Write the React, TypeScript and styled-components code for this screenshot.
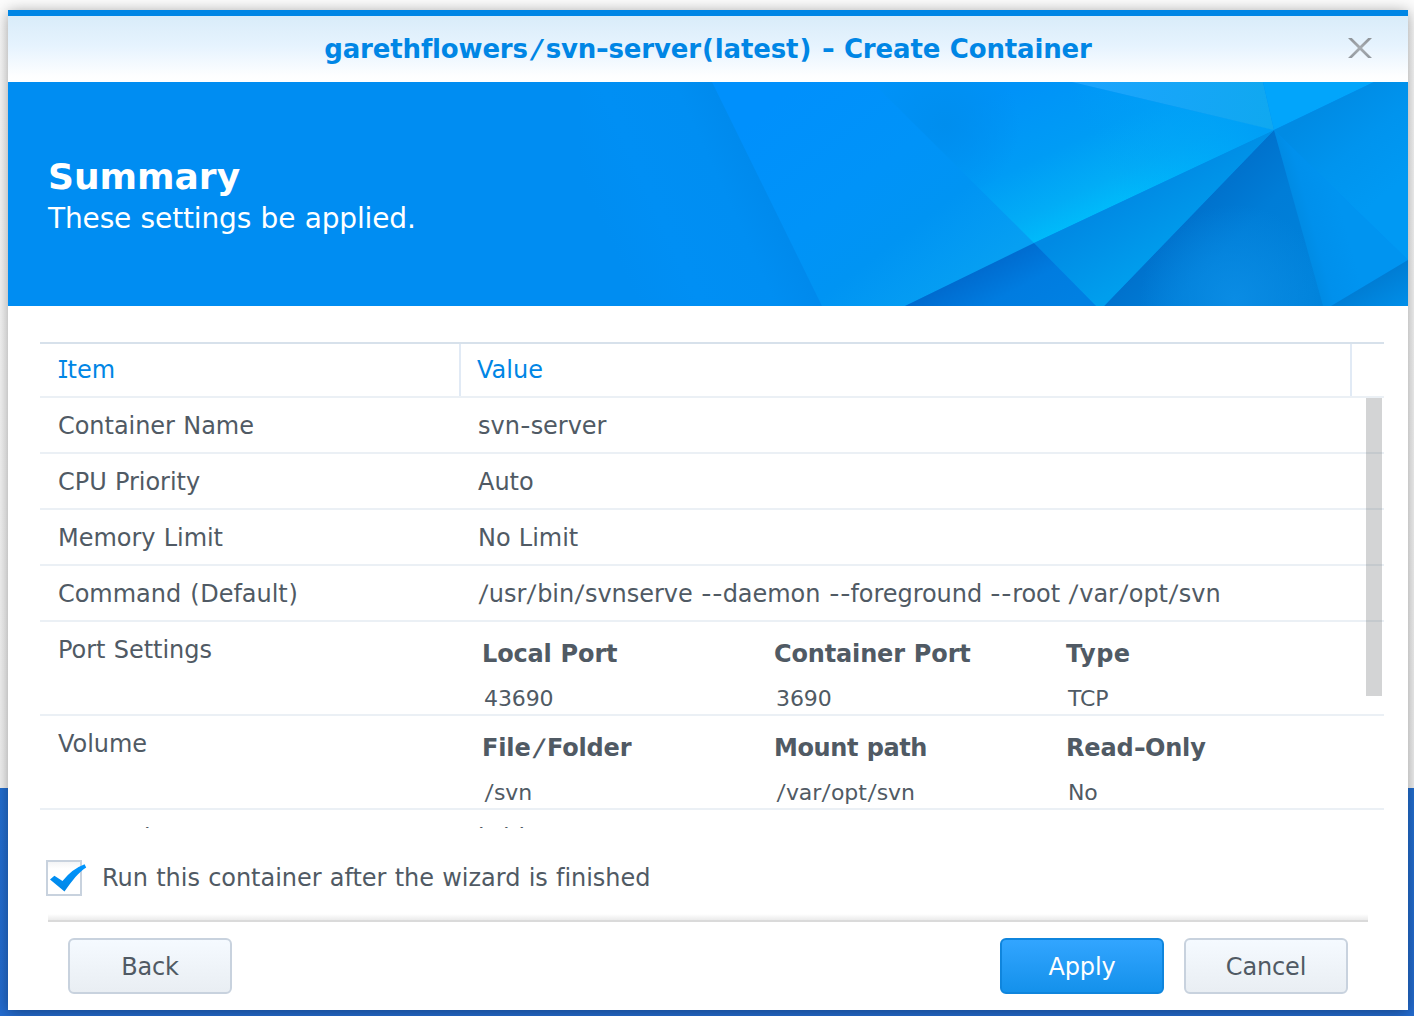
import React from "react";
import styled, { createGlobalStyle } from "styled-components";

const Global = createGlobalStyle`
  * { box-sizing: border-box; }
  html, body { margin: 0; height: 100%; overflow: hidden; }
  body {
    font-family: "DejaVu Sans", Verdana, sans-serif;
    font-size: 24px;
    font-variant-ligatures: none;
    word-spacing: 0.03em;
    color: #505a64;
  }
`;

const Desktop = styled.div`
  width: 1414px;
  height: 1016px;
  padding: 10px 6px 6px 8px;
  overflow: hidden;
  background: linear-gradient(180deg, #fcfcfc 0, #f4f4f4 788px, #236fd2 788px, #246cd0 100%);
`;

const Dialog = styled.section`
  width: 1400px;
  height: 1000px;
  display: flex;
  flex-direction: column;
  background: #fff;
  border-top: 6px solid #0086e5;
  box-shadow: 0 2px 14px rgba(0, 0, 0, 0.38);
`;

const TitleBar = styled.header`
  height: 66px;
  flex: none;
  display: grid;
  grid-template-columns: 96px 1fr 96px;
  align-items: center;
  background: linear-gradient(180deg, #d9ecf9 0%, #e6f3fe 45%, #fdfeff 90%, #fff 100%);
`;

const Title = styled.h1`
  margin: 0;
  grid-column: 2;
  text-align: center;
  font-size: 26px;
  line-height: 32px;
  font-weight: 700;
  letter-spacing: -0.15px;
  color: #0086e5;
  white-space: nowrap;
`;

const CloseButton = styled.button`
  width: 26px;
  height: 22px;
  margin: 0 0 2px 35px;
  padding: 0;
  border: 0;
  background: none;
  display: flex;
`;

const Banner = styled.div`
  height: 224px;
  flex: none;
  display: grid;
  background: #008df2;
  color: #fff;
  > * { grid-area: 1 / 1; }
`;

const BannerArt = styled.svg`
  display: block;
  justify-self: end;
`;

const BannerText = styled.div`
  padding: 72px 40px 0;
`;

const Heading = styled.h2`
  margin: 0;
  font-size: 36px;
  line-height: 46px;
  font-weight: 700;
`;

const Lead = styled.p`
  margin: 0;
  font-size: 28px;
  line-height: 38px;
  letter-spacing: -0.15px;
`;

const Table = styled.div`
  margin: 36px 24px 0 32px;
  flex: none;
`;

const TableHead = styled.div`
  height: 56px;
  display: grid;
  grid-template-columns: 421px 891px 1fr;
  border-top: 2px solid #d7e1eb;
  border-bottom: 2px solid #ebf0f5;
  color: #0086e5;
`;

const HeadCell = styled.div<{ $inset?: number }>`
  padding-left: ${(p) => p.$inset ?? 18}px;
  line-height: 52px;
  border-right: 2px solid #e1eaf5;
  &:last-child { border-right: 0; }
`;

const SerifI = styled.span`
  display: inline-block;
  width: 0.4em;
  line-height: 1;
  font-family: "DejaVu Sans Mono", monospace;
  text-indent: -0.1em;
  transform: scaleX(0.82);
`;

const TableBody = styled.div`
  position: relative;
  height: 430px;
  overflow: hidden;
`;

const Row = styled.div<{ $tall?: boolean }>`
  height: ${(p) => (p.$tall ? 94 : 56)}px;
  display: grid;
  grid-template-columns: 420px 1fr;
  border-bottom: 2px solid #ebf0f5;
  line-height: 56px;
  white-space: nowrap;
`;

const Cell = styled.div`
  height: 54px;
  padding-left: 18px;
  letter-spacing: -0.04px;
`;

const SubTable = styled.div`
  padding-left: 22px;
  display: grid;
  grid-template-columns: 292px 292px 1fr;
  grid-template-rows: 62px 30px;
`;

const SubHead = styled.div<{ $tracking?: number }>`
  padding-top: 4px;
  font-weight: 700;
  letter-spacing: ${(p) => p.$tracking ?? -0.15}px;
`;

const SubValue = styled.div`
  padding-left: 2px;
  font-size: 22px;
  line-height: 30px;
  letter-spacing: -0.1px;
`;

const WideMark = styled.span<{ $pad: number; $shape?: string }>`
  display: inline-block;
  line-height: 1;
  padding: 0 ${(p) => p.$pad / 2}em;
  transform: ${(p) => p.$shape ?? "none"};
`;

const ScrollThumb = styled.div`
  position: absolute;
  top: 0;
  right: 2px;
  width: 16px;
  height: 298px;
  background: rgba(80, 82, 86, 0.25);
`;

const RunOption = styled.label`
  height: 36px;
  margin: 32px 0 0 38px;
  flex: none;
  display: flex;
  align-items: center;
  gap: 14px;
`;

const CheckIcon = styled.svg`
  display: block;
  flex: none;
`;

const RunLabel = styled.span`
  line-height: 36px;
  letter-spacing: -0.04px;
`;

const Divider = styled.div`
  height: 8px;
  margin: 18px 40px 0;
  flex: none;
  background: linear-gradient(180deg, #fff, #ebebeb);
  border-bottom: 2px solid #dadada;
`;

const Footer = styled.footer`
  padding: 16px 60px 0;
  display: flex;
  gap: 20px;
`;

const Button = styled.button<{ $primary?: boolean; $pushed?: boolean }>`
  width: 164px;
  height: 56px;
  padding: 2px 0 0;
  margin-right: ${(p) => (p.$pushed ? "auto" : "0")};
  font: inherit;
  letter-spacing: -0.15px;
  border-radius: 6px;
  border: 2px solid ${(p) => (p.$primary ? "#0f85dd" : "#c8d2de")};
  color: ${(p) => (p.$primary ? "#fff" : "#505a64")};
  background: ${(p) =>
    p.$primary
      ? "linear-gradient(180deg, #32a5ff, #1491eb)"
      : "linear-gradient(180deg, #f5faff, #e9eef3)"};
`;

/* Extra advance, in em, given to punctuation in the regular and bold weights, and how its shape is widened. */
const marks: Record<string, { pad: [number, number]; shape?: [string, string] }> = {
  "-": { pad: [0.093, 0.065], shape: ["scaleX(1.18)", "scaleX(1.22)"] },
  "/": { pad: [0.117, 0.324], shape: ["skewX(-5deg)", "skewX(-13deg)"] },
  "(": { pad: [0.064, 0.086] },
  ")": { pad: [0.064, 0.086] },
};

const Spaced = ({ text, bold = false }: { text: string; bold?: boolean }) => {
  const weight = bold ? 1 : 0;
  return (
    <>
      {text.split(/([-/()])/).map((part, i) =>
        marks[part] ? (
          <WideMark key={i} $pad={marks[part].pad[weight]} $shape={marks[part].shape?.[weight]}>
            {part}
          </WideMark>
        ) : (
          part
        ),
      )}
    </>
  );
};

const settings = [
  ["Container Name", "svn-server"],
  ["CPU Priority", "Auto"],
  ["Memory Limit", "No Limit"],
  ["Command (Default)", "/usr/bin/svnserve --daemon --foreground --root /var/opt/svn"],
];

const groups = [
  { name: "Port Settings", heads: ["Local Port", "Container Port", "Type"], values: ["43690", "3690", "TCP"] },
  { name: "Volume", heads: ["File/Folder", "Mount path", "Read-Only"], values: ["/svn", "/var/opt/svn", "No"] },
];

const headTracking: Record<string, number> = { "Mount path": -0.4, Type: 0.5 };

type Stop = [number, string];
const Gradient = ({ id, from, to, stops }: { id: string; from: [number, number]; to: [number, number]; stops: Stop[] }) => (
  <linearGradient id={id} gradientUnits="userSpaceOnUse" x1={from[0]} y1={from[1]} x2={to[0]} y2={to[1]}>
    {stops.map(([o, c]) => (
      <stop key={o} offset={o} stopColor={c} />
    ))}
  </linearGradient>
);

const Halo = ({ id, at, r, color }: { id: string; at: [number, number]; r: number; color: string }) => (
  <radialGradient id={id} gradientUnits="userSpaceOnUse" cx={at[0]} cy={at[1]} r={r}>
    <stop offset="0" stopColor={color} stopOpacity="1" />
    <stop offset="1" stopColor={color} stopOpacity="0" />
  </radialGradient>
);

/* Faceted crystal artwork; the right-hand facets meet around the vertex at (1274, 130). */
const Facets = () => (
  <BannerArt width="828" height="224" viewBox="580 82 828 224">
    <defs>
      <Gradient id="left" from={[590, 200]} to={[765, 120]} stops={[[0, "#008df1"], [0.3, "#008ff4"], [0.65, "#008ef2"], [1, "#0087e9"]]} />
      <Gradient id="mid" from={[800, 82]} to={[960, 290]} stops={[[0, "#0090fc"], [0.45, "#0093f8"], [0.7, "#0094f3"], [1, "#069ff2"]]} />
      <Gradient id="glow" from={[1036, 76]} to={[1100, 212]} stops={[[0, "#0092f8"], [0.5, "#009cf5"], [0.82, "#02acf6"], [1, "#00bafa"]]} />
      <linearGradient id="glowFade" gradientUnits="userSpaceOnUse" x1="1120" y1="202" x2="1265" y2="134">
        <stop offset="0" stopColor="#00a0f8" stopOpacity="0" />
        <stop offset="1" stopColor="#009ff6" stopOpacity="1" />
      </linearGradient>
      <Halo id="glowShade" at={[945, 125]} r={75} color="#008eee" />
      <Gradient id="topA" from={[1080, 82]} to={[1270, 120]} stops={[[0, "#1ca4fe"], [1, "#10a8f0"]]} />
      <Gradient id="right" from={[1290, 130]} to={[1360, 215]} stops={[[0, "#008be4"], [0.5, "#0094ee"], [1, "#0099f3"]]} />
      <Gradient id="rightLow" from={[1285, 220]} to={[1340, 205]} stops={[[0, "#0086dc"], [0.45, "#0090ec"], [1, "#0094f0"]]} />
      <Gradient id="deep" from={[1189, 218]} to={[1289, 314]} stops={[[0, "#0072cd"], [0.35, "#007dd7"], [1, "#0082da"]]} />
      <Halo id="deepLight" at={[1235, 300]} r={95} color="#0a8ce4" />
      <Gradient id="wing" from={[1110, 205]} to={[1150, 270]} stops={[[0, "#008ae4"], [1, "#009eed"]]} />
      <Gradient id="lowLeft" from={[975, 270]} to={[1010, 335]} stops={[[0, "#006bcf"], [0.5, "#007ce0"], [1, "#0080e2"]]} />
      <Gradient id="corner" from={[1365, 285]} to={[1385, 320]} stops={[[0, "#007dd4"], [1, "#008fe9"]]} />
    </defs>
    <path fill="url(#left)" d="M580 82H713L823 306H580Z" />
    <path fill="url(#mid)" d="M712 82H1072L1034 244L905 306H822Z" />
    <path fill="url(#glow)" d="M872 82H1072L1274 130L1034 243Z" />
    <path fill="url(#glowShade)" d="M872 82H1072L1034 243Z" />
    <path fill="url(#glowFade)" d="M1072 82L1274 130L1034 243Z" />
    <path fill="url(#topA)" d="M1072 82H1263L1274 130Z" />
    <path fill="#02a5fb" d="M1263 82H1374L1274 130Z" />
    <path fill="url(#right)" d="M1374 82H1408V260L1274 130Z" />
    <path fill="url(#rightLow)" d="M1274 130L1408 260L1331 306H1322Z" />
    <path fill="url(#corner)" d="M1408 260V306H1331Z" />
    <path fill="url(#deep)" d="M1274 130L1323 306H1104Z" />
    <path fill="url(#deepLight)" d="M1274 130L1323 306H1104Z" />
    <path fill="url(#wing)" d="M1274 130L1104 306H1096L1034 243Z" />
    <path fill="url(#lowLeft)" d="M1034 243L1096 306H905Z" />
  </BannerArt>
);

export default function App() {
  return (
    <Desktop>
      <Global />
      <Dialog>
        <TitleBar>
          <Title>
            <Spaced bold text="garethflowers/svn-server(latest) - Create Container" />
          </Title>
          <CloseButton aria-label="Close">
            <svg width="26" height="22" viewBox="0 0 26 22">
              <defs>
                <Gradient id="cross" from={[0, 1]} to={[0, 21]} stops={[[0, "#8f9499"], [0.5, "#a6abb0"], [1, "#93999f"]]} />
              </defs>
              <path fill="url(#cross)" d="M1 1H4.8L13 9L21.2 1H25L15 11L25 21H21.2L13 13L4.8 21H1L11 11Z" />
            </svg>
          </CloseButton>
        </TitleBar>
        <Banner>
          <Facets />
          <BannerText>
            <Heading>Summary</Heading>
            <Lead>These settings be applied.</Lead>
          </BannerText>
        </Banner>
        <Table>
          <TableHead>
            <HeadCell>
              <SerifI>I</SerifI>tem
            </HeadCell>
            <HeadCell $inset={16}>Value</HeadCell>
            <HeadCell />
          </TableHead>
          <TableBody>
            {settings.map(([name, value]) => (
              <Row key={name}>
                <Cell><Spaced text={name} /></Cell>
                <Cell><Spaced text={value} /></Cell>
              </Row>
            ))}
            {groups.map((g) => (
              <Row key={g.name} $tall>
                <Cell>{g.name}</Cell>
                <SubTable>
                  {g.heads.map((h) => (
                    <SubHead key={h} $tracking={headTracking[h]}>
                      <Spaced bold text={h} />
                    </SubHead>
                  ))}
                  {g.values.map((v) => (
                    <SubValue key={v}><Spaced text={v} /></SubValue>
                  ))}
                </SubTable>
              </Row>
            ))}
            <Row>
              <Cell>Network</Cell>
              <Cell>bridge</Cell>
            </Row>
            <ScrollThumb />
          </TableBody>
        </Table>
        <RunOption>
          <CheckIcon width="42" height="36" viewBox="0 0 42 36">
            <defs>
              <Gradient id="well" from={[0, 2]} to={[0, 9]} stops={[[0, "#f4f5f6"], [1, "#ffffff"]]} />
              <Gradient id="tick" from={[0, 4]} to={[0, 32]} stops={[[0, "#0096ff"], [1, "#0086e5"]]} />
            </defs>
            <rect x="1" y="1" width="34" height="34" fill="url(#well)" stroke="#c8d2de" strokeWidth="2" />
            <path fill="url(#tick)" d="M4 19.5L8.4 15.8L16.5 21Q26 9 38.6 4.3L40.2 7.6C32 12.8 26.5 20.5 18.5 31.6Z" />
          </CheckIcon>
          <RunLabel>Run this container after the wizard is finished</RunLabel>
        </RunOption>
        <Divider />
        <Footer>
          <Button $pushed>Back</Button>
          <Button $primary>Apply</Button>
          <Button>Cancel</Button>
        </Footer>
      </Dialog>
    </Desktop>
  );
}
